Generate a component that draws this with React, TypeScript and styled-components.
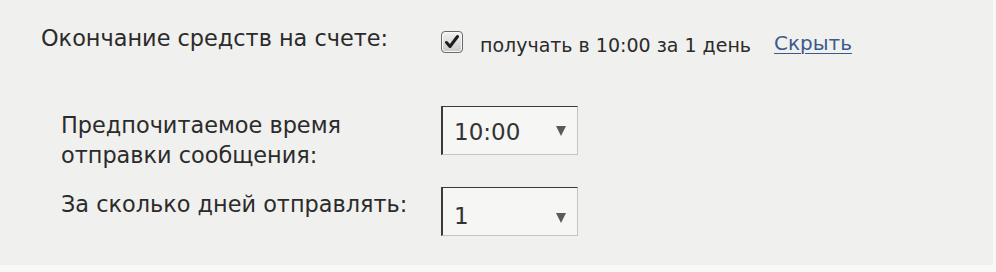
import styled, { createGlobalStyle } from 'styled-components';

const GlobalStyle = createGlobalStyle`
  html, body {
    margin: 0;
    padding: 0;
    background: #f8f8f7;
  }
  body {
    font-family: 'DejaVu Sans', 'Noto Sans', 'Liberation Sans', sans-serif;
    color: #2b2b2b;
  }
`;

const Panel = styled.div`
  width: 993px;
  height: 265px;
  box-sizing: border-box;
  background: #f0f0ee;
  padding: 22px 0 0 41px;
`;

const Row = styled.div<{ $indent?: number; $top?: number }>`
  display: flex;
  align-items: flex-start;
  padding-left: ${(p) => p.$indent || 0}px;
  margin-top: ${(p) => p.$top || 0}px;
`;

const Label = styled.div<{ $width: number; $shift?: number }>`
  width: ${(p) => p.$width}px;
  flex-shrink: 0;
  margin-top: ${(p) => p.$shift || 0}px;
  font-size: 22.4px;
  line-height: 30px;
  color: #2b2b2b;
`;

const CheckGroup = styled.div`
  display: flex;
  align-items: center;
  height: 31px;
  margin-top: 4px;
`;

const CheckBox = styled.span`
  display: inline-flex;
  align-items: center;
  justify-content: center;
  width: 20px;
  height: 20px;
  border: 1px solid #6a6a6a;
  border-radius: 4px;
  background: linear-gradient(#f2f2f2, #c9c9c9);
  box-shadow: inset 0 0 0 1px #fafafa;
`;

const Hint = styled.span`
  margin-left: 17px;
  font-size: 19px;
  line-height: 24px;
  margin-top: 6px;
  color: #2b2b2b;
`;

const Link = styled.a`
  margin-left: 23px;
  font-size: 20px;
  margin-top: 2px;
  color: #3c5b8c;
  text-decoration: underline;
  text-underline-offset: 3px;
  text-decoration-thickness: 1px;
  cursor: pointer;
`;

const SelectBox = styled.div<{ $low?: boolean }>`
  width: 137px;
  height: 49px;
  box-sizing: border-box;
  display: flex;
  align-items: center;
  justify-content: space-between;
  padding: ${(p) => (p.$low ? '8px 11px 0 11px' : '2px 11px 0 11px')};
  background: #f6f6f5;
  border-top: 1px solid #3a3a3a;
  border-left: 2px solid #3a3a3a;
  border-right: 1px solid #c4c4c4;
  border-bottom: 1px solid #c4c4c4;
  font-size: 23px;
  color: #333;
`;

const Arrow = styled.span`
  width: 0;
  height: 0;
  border-left: 5px solid transparent;
  border-right: 5px solid transparent;
  border-top: 10px solid #5a5a5a;
  align-self: flex-start;
  margin-top: 17px;
`;

const CheckMark = () => (
  <svg width="16" height="16" viewBox="0 0 16 16">
    <path d="M2.5 8.5 L6 12.5 L13.5 2.5" fill="none" stroke="#1c1c1c" strokeWidth="3" strokeLinecap="round" strokeLinejoin="round" />
  </svg>
);

const App = () => {
  return (
    <>
      <GlobalStyle />
      <Panel>
        <Row>
          <Label $width={400} $shift={1}>Окончание средств на счете:</Label>
          <CheckGroup>
            <CheckBox>
              <CheckMark />
            </CheckBox>
            <Hint>получать в 10:00 за 1 день</Hint>
            <Link>Скрыть</Link>
          </CheckGroup>
        </Row>
        <Row $indent={20} $top={49}>
          <Label $width={380} $shift={4}>
            Предпочитаемое время
            <br />
            отправки сообщения:
          </Label>
          <SelectBox>
            10:00
            <Arrow />
          </SelectBox>
        </Row>
        <Row $indent={20} $top={17}>
          <Label $width={380} $shift={2}>
            За сколько дней отправлять:
          </Label>
          <SelectBox $low>
            1
            <Arrow />
          </SelectBox>
        </Row>
      </Panel>
    </>
  );
};

export default App;
